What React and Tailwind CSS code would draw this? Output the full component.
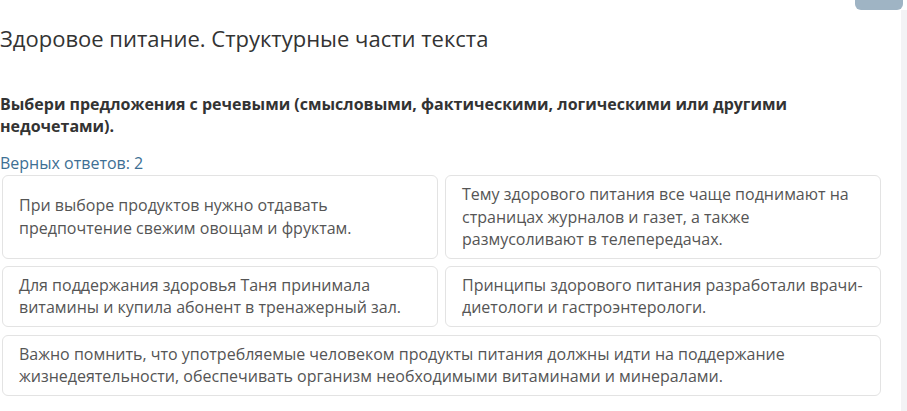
const OPTIONS = [
  'При выборе продуктов нужно отдавать предпочтение свежим овощам и фруктам.',
  'Тему здорового питания все чаще поднимают на страницах журналов и газет, а также размусоливают в телепередачах.',
  'Для поддержания здоровья Таня принимала витамины и купила абонент в тренажерный зал.',
  'Принципы здорового питания разработали врачи-диетологи и гастроэнтерологи.',
];

const LAST = 'Важно помнить, что употребляемые человеком продукты питания должны идти на поддержание жизнедеятельности, обеспечивать организм необходимыми витаминами и минералами.';

function Option({ text, className = '' }) {
  return (
    <div className={`flex items-center rounded-md border border-[#e3e3e3] bg-white px-[16px] py-[7px] text-[16px] leading-[22.5px] text-[#555] ${className}`}>
      <span>{text}</span>
    </div>
  );
}

export default function App() {
  return (
    <div className="relative h-[411px] w-[907px] overflow-hidden bg-white font-['Open_Sans',sans-serif]">
      {/* top tab and side strip */}
      <div className="absolute right-[4px] top-0 h-[10px] w-[48px] rounded-b-md bg-[#9fb4c4]" />
      <div className="absolute right-0 top-[10px] h-[401px] w-[6px] bg-[#f3f3f5]" />

      <div className="w-[881px] pt-[23px]">
        <h1 className="text-[22px] leading-[30px] text-[#333]">Здоровое питание. Структурные части текста</h1>

        <p className="mt-[40px] pr-[80px] text-[16px] font-bold leading-[22px] text-[#333]">
          Выбери предложения с речевыми (смысловыми, фактическими, логическими или другими недочетами).
        </p>

        <p className="mt-[16px] text-[16px] leading-[20px] text-[#3d6f94]">Верных ответов: 2</p>

        <div className="ml-[2px] mt-[2px] grid grid-cols-2 gap-x-[7px] gap-y-[7px]">
          {OPTIONS.map(t => <Option key={t} text={t} />)}
        </div>
        <Option text={LAST} className="ml-[2px] mt-[8px]" />
      </div>
    </div>
  );
}
